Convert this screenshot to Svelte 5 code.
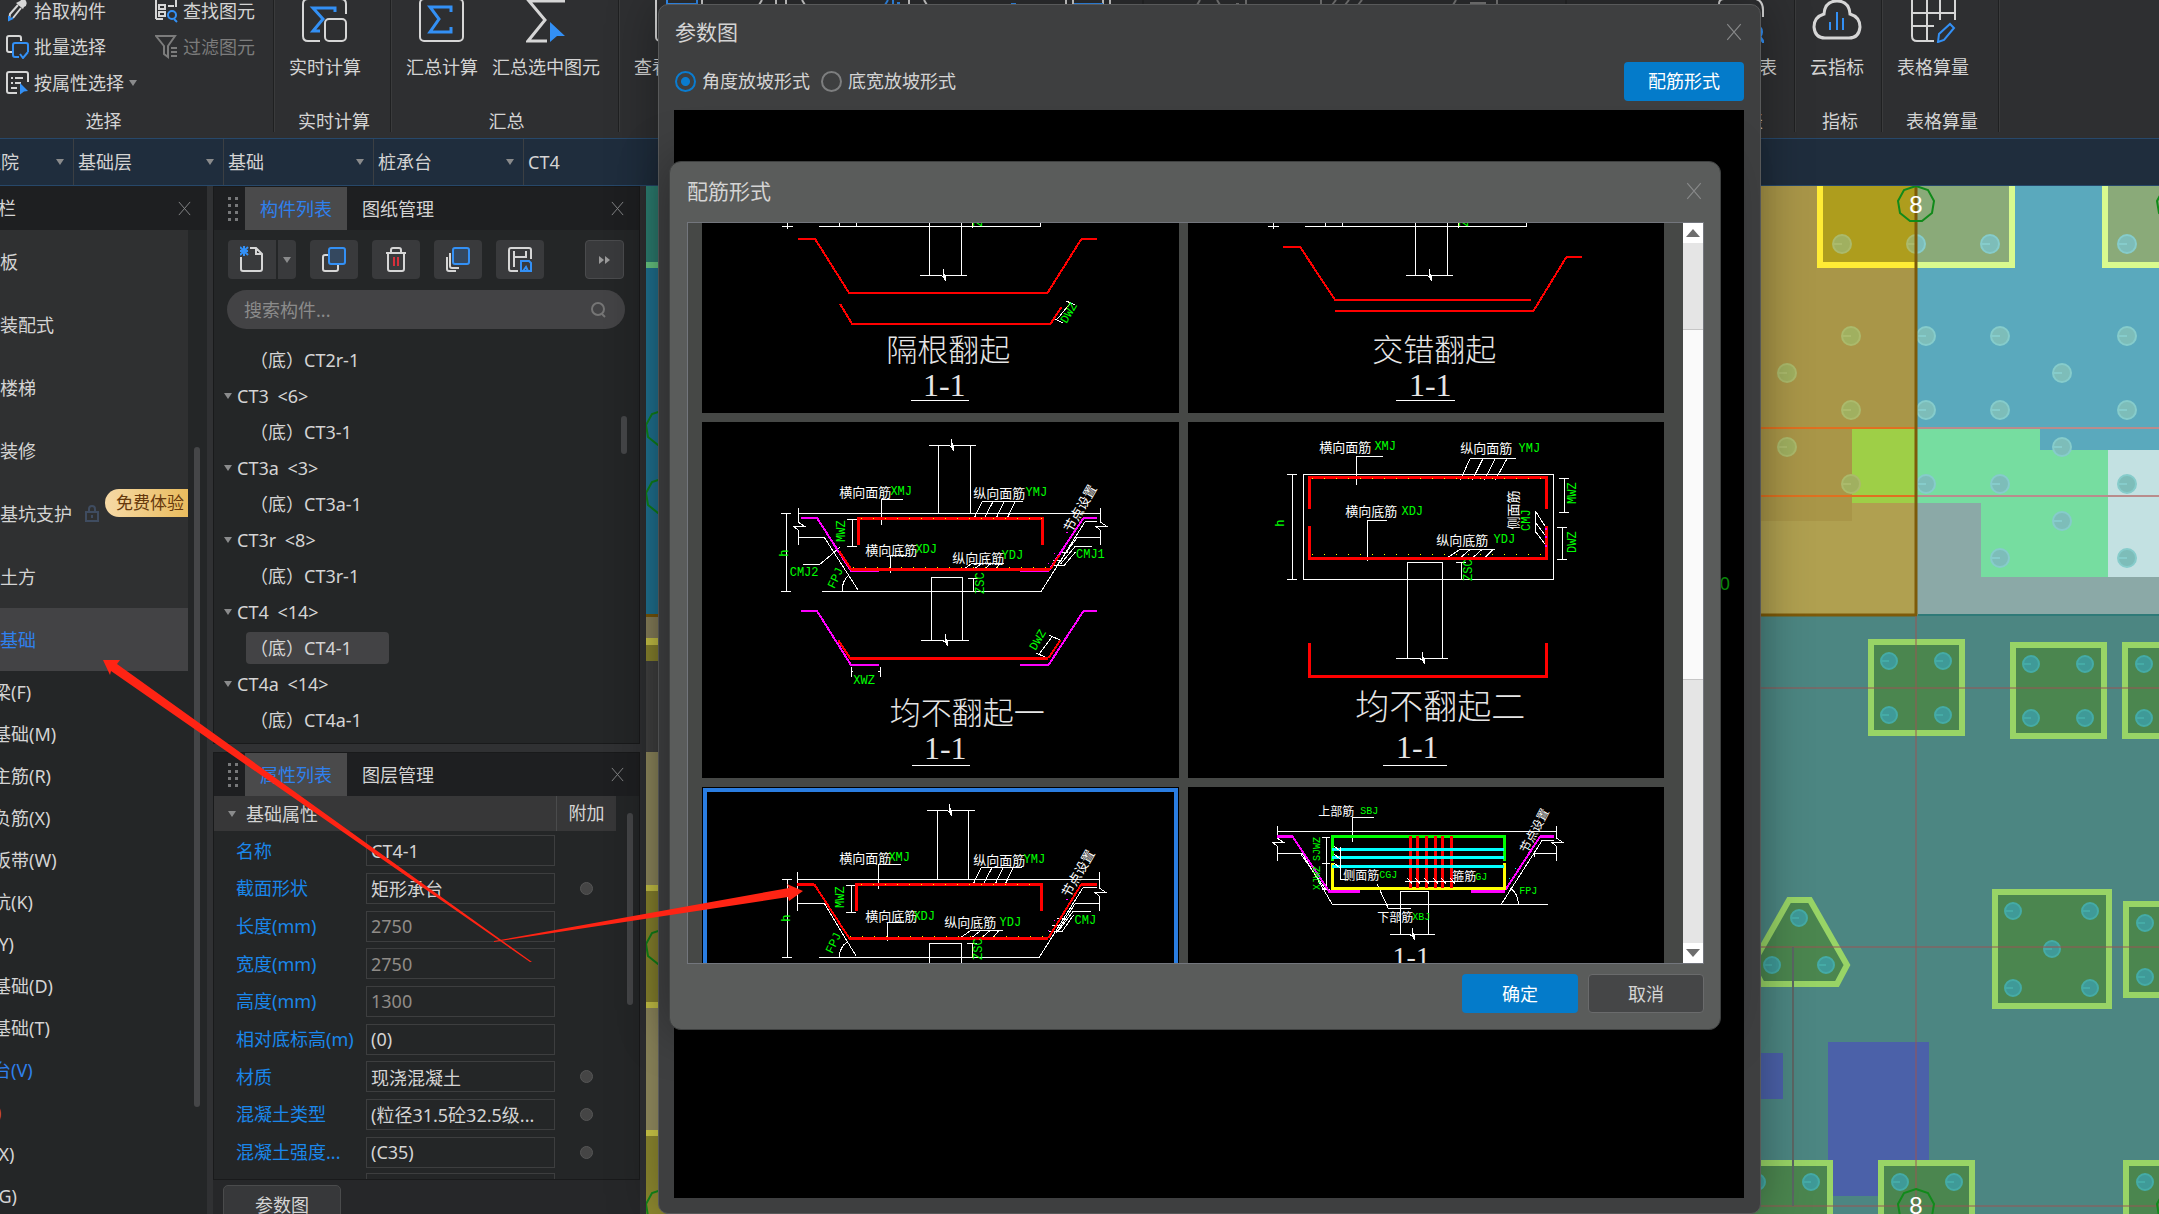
<script>
  const combos = [
    { name: '工程', value: '医院' },
    { name: '楼层', value: '基础层' },
    { name: '类别', value: '基础' },
    { name: '构件类型', value: '桩承台' },
    { name: '构件', value: 'CT4' }
  ];

  const categories = ['板', '装配式', '楼梯', '装修', '基坑支护', '土方', '基础'];
  const subItems = ['梁(F)', '基础(M)', '主筋(R)', '负筋(X)', '板带(W)', '坑(K)', '(Y)', '基础(D)', '基础(T)', '台(V)', ')', '(X)', '(G)'];

  const tree = [
    { child: true, text: '（底）CT2r-1' },
    { text: 'CT3', count: '<6>' },
    { child: true, text: '（底）CT3-1' },
    { text: 'CT3a', count: '<3>' },
    { child: true, text: '（底）CT3a-1' },
    { text: 'CT3r', count: '<8>' },
    { child: true, text: '（底）CT3r-1' },
    { text: 'CT4', count: '<14>' },
    { child: true, text: '（底）CT4-1', selected: true },
    { text: 'CT4a', count: '<14>' },
    { child: true, text: '（底）CT4a-1' }
  ];

  const props = [
    { label: '名称', value: 'CT4-1' },
    { label: '截面形状', value: '矩形承台', extra: true },
    { label: '长度(mm)', value: '2750', dim: true },
    { label: '宽度(mm)', value: '2750', dim: true },
    { label: '高度(mm)', value: '1300', dim: true },
    { label: '相对底标高(m)', value: '(0)' },
    { label: '材质', value: '现浇混凝土', extra: true },
    { label: '混凝土类型', value: '(粒径31.5砼32.5级...', extra: true },
    { label: '混凝土强度...', value: '(C35)', extra: true }
  ];

  let slope = $state('angle');

  // ---- section drawings ----
  const zig = (x1, x2, y, c) => `M${x1} ${y}H${c - 4}L${c - 1} ${y + 2}V${y - 6}L${c + 1} ${y + 6}V${y}H${x2}`;
  const vzig = (x, y1, y2, c) => `M${x} ${y1}V${c - 4}L${x + 6} ${c}H${x - 5}L${x} ${c + 4}V${y2}`;
  const vdim = (x, y1, y2, w = 5) => `M${x} ${y1}V${y2}M${x - w} ${y1}H${x + w}M${x - w} ${y2}H${x + w}`;
  const fan = (tops, ty, bottoms, by, end) =>
    `M${tops[0]} ${ty}H${end}` + tops.map((t, i) => `M${t} ${ty}L${bottoms[i]} ${by}`).join('');
  const capTop = (dx) => `M${819 + dx} 226H${1040 + dx}V222M${839 + dx} 226V222M${856 + dx} 226V222M${782 + dx} 226H${793 + dx}M${787 + dx} 222V229M${929 + dx} 222V275M${961 + dx} 222V275M${972 + dx} 222V228` + zig(920 + dx, 967 + dx, 275, 944 + dx);

  const cells = [
    {
      box: '702 223 476 190', name: '隔根翻起',
      strokes: [
        ['w', capTop(0) + 'M1066 301L1075 305M1070 303L1056 320M1053 318L1063 323'],
        ['r', 'M798 239H815L849 293H1047L1081 239H1097M840 304L852 324H1050L1061 307']
      ],
      texts: [['g', 979, 216, 'ZSC', -90], ['g', 1069, 313, 'DWZ', -60], ['t', 948, 347, '隔根翻起'], ['n', 944, 385, '1-1']],
      rule: 'M911 400H969'
    },
    {
      box: '1187 223 476 190', name: '交错翻起',
      strokes: [
        ['w', capTop(485)],
        ['r', 'M1282 247H1299L1334 300H1530M1334 311H1532L1565 257H1581']
      ],
      texts: [['g', 1464, 216, 'ZSC', -90], ['t', 1433, 347, '交错翻起'], ['n', 1429, 385, '1-1']],
      rule: 'M1395 400H1454'
    },
    {
      box: '702 422 476 356', name: '均不翻起一',
      strokes: [
        ['w', zig(929, 976, 445, 952) + 'M938 445V513M970 445V513M798 513H1100M798 537H824L858 590M1100 537H1077L1056 566M1097 521H1085L1041 591H822'
          + vzig(798, 508, 545, 526) + vzig(1100, 508, 545, 526) + vdim(786, 513, 591) + vdim(852, 519, 546)
          + 'M903 499H881V525M907 555H890V573' + fan([982, 993, 1004, 1015], 501, [973, 983, 995, 1006], 520, 1023)
          + fan([972, 982, 991, 1000], 563, [962, 972, 983, 994], 570, 1004)
          + 'M803 564H820L840 547M842 591Q842 580 849 575M1092 546H1075L1060 564M1075 552L1064 565H1051M1059 552H1068M1053 560H1062'
          + 'M931 640V577H962V640' + zig(921, 969, 640, 946) + vdim(973, 578, 591)
          + 'M1049 635L1060 640M1052 636L1038 655M1036 653L1048 658M851 667V677M880 667V677M851 672L853 671M880 672L878 671'],
        ['m', 'M801 518H817L851 571H879M1097 518H1083L1048 571H1020M801 611H817L851 665H879M1097 611H1083L1048 665H1020'],
        ['r b', 'M858 545V518H1042V545M851 569H1050M850 658H1048'],
        ['r', 'M839 551L851 569M1050 569L1059 555M838 640L850 658M1048 658L1060 640'],
        ['y dots', 'M861 518H1042M853 567H1050'],
        ['m dots', 'M1048 564L1068 530']
      ],
      texts: [
        ['c', 865, 491, '横向面筋'], ['g', 901, 492, 'XMJ'], ['c', 999, 492, '纵向面筋'], ['g', 1036, 493, 'YMJ'],
        ['c', 891, 549, '横向底筋'], ['g', 926, 550, 'XDJ'], ['c', 978, 557, '纵向底筋'], ['g', 1012, 556, 'YDJ'],
        ['g', 842, 531, 'MWZ', -90], ['g', 785, 553, 'h', -90], ['g', 804, 573, 'CMJ2'], ['g', 1090, 555, 'CMJ1'],
        ['g', 836, 578, 'FPJ', -65], ['g', 981, 583, 'ZSC', -90], ['c', 1079, 508, '节点设置', -60],
        ['g', 1038, 640, 'DWZ', -60], ['g', 864, 681, 'XWZ'], ['t', 967, 710, '均不翻起一'], ['n', 945, 748, '1-1']
      ],
      rule: 'M912 765H970'
    },
    {
      box: '1187 422 476 356', name: '均不翻起二',
      strokes: [
        ['w', 'M1302 474H1552V579H1302ZM1382 456H1355V485M1386 520H1366V561'
          + fan([1469, 1482, 1494, 1506], 458, [1459, 1471, 1483, 1494], 480, 1515)
          + fan([1459, 1469, 1481, 1492], 549, [1447, 1460, 1472, 1484], 557, 1494)
          + vdim(1291, 474, 579) + vdim(1563, 478, 512) + vdim(1561, 527, 559) + vdim(1460, 562, 579)
          + 'M1534 511V533M1534 511L1545 528M1534 522L1545 537M1534 531L1545 546M1406 658V562H1441V658' + zig(1395, 1447, 658, 1422)],
        ['r b', 'M1308 509V477H1545V509M1308 526V558H1545V526M1308 643V676H1545V643'],
        ['y dots', 'M1311 478H1545M1311 554H1545'],
        ['m', 'M1545 528V530M1545 536V538M1545 545V547']
      ],
      texts: [
        ['c', 1344, 446, '横向面筋'], ['g', 1384, 447, 'XMJ'], ['c', 1485, 447, '纵向面筋'], ['g', 1528, 449, 'YMJ'],
        ['c', 1370, 510, '横向底筋'], ['g', 1411, 512, 'XDJ'], ['c', 1461, 539, '纵向底筋'], ['g', 1503, 540, 'YDJ'],
        ['c', 1511, 510, '侧面筋', -90], ['g', 1526, 520, 'CMJ', -90], ['g', 1572, 493, 'MWZ', -90], ['g', 1572, 542, 'DWZ', -90],
        ['g', 1280, 523, 'h', -90], ['g', 1468, 570, 'ZSC', -90], ['t big', 1439, 704, '均不翻起二'], ['n', 1416, 747, '1-1']
      ],
      rule: 'M1382 765H1446'
    },
    {
      box: '702 787 476 176', name: '翻起形式', selected: true,
      strokes: [
        ['w', zig(927, 975, 810, 950) + 'M937 810V879M968 810V879M797 879H1099M797 903H824L856 956M1099 903H1075L1056 933M1097 887H1083L1039 957H819'
          + 'M797 872V911' + vzig(1099, 872, 911, 892) + vdim(787, 879, 957) + vdim(851, 885, 912)
          + 'M901 864H878V889M904 922H887V941' + fan([981, 992, 1003, 1013], 867, [972, 982, 994, 1004], 886, 1022)
          + fan([971, 981, 990, 999], 930, [961, 972, 982, 993], 937, 1003)
          + 'M839 957Q840 946 847 942M1091 911H1073L1058 931M1073 915L1062 931H1049M1057 918H1066M1052 925H1061M929 964V943H961V964' + vdim(972, 943, 957)],
        ['r b', 'M797 884H814M849 938H1048M1081 884H1097M856 911V884H1041V911'],
        ['r', 'M814 884L849 938M1048 938L1081 884'],
        ['y dots', 'M861 884H1041M850 936H1048'],
        ['m dots', 'M1048 931L1068 897']
      ],
      texts: [
        ['c', 865, 857, '横向面筋'], ['g', 899, 858, 'XMJ'], ['c', 999, 859, '纵向面筋'], ['g', 1034, 860, 'YMJ'],
        ['c', 891, 915, '横向底筋'], ['g', 924, 917, 'XDJ'], ['c', 970, 921, '纵向底筋'], ['g', 1010, 923, 'YDJ'],
        ['g', 841, 897, 'MWZ', -90], ['g', 787, 918, 'h', -90], ['g', 1085, 921, 'CMJ'], ['g', 834, 943, 'FPJ', -65],
        ['g', 979, 949, 'ZSC', -90], ['c', 1077, 873, '节点设置', -60]
      ],
      rule: ''
    },
    {
      box: '1187 787 476 176', name: '配筋形式六',
      strokes: [
        ['w', 'M1276 831H1555M1276 853H1301L1331 904H1547M1555 853H1533V857M1553 840H1541L1500 904M1299 853L1325 890'
          + vzig(1276, 826, 861, 842) + vzig(1555, 826, 861, 842) + vdim(1325, 837, 863, 4) + vdim(1325, 863, 889, 4)
          + 'M1373 817H1351V842M1376 884L1387 908H1410M1509 888Q1517 894 1517 904M1399 934V891H1427V934' + zig(1389, 1434, 934, 1412)],
        ['m', 'M1276 836H1291L1327 890M1539 836L1504 890'],
        ['m b', 'M1276 836H1291M1327 891H1359M1553 836H1539M1504 891H1470'],
        ['l b', 'M1331 861V836H1503V861'],
        ['y b', 'M1331 863V888H1503V863'],
        ['r b', 'M1409 836V888M1416 836V888M1425 836V888M1434 836V888M1441 836V888M1450 836V888'],
        ['a b', 'M1331 849H1503M1331 857H1503M1331 866H1503'],
        ['w', 'M1347 879H1339V847M1333 846L1340 852M1333 854L1340 860M1333 863L1340 869M1404 881H1461M1406 878L1411 884M1414 878L1419 884M1423 878L1428 884M1432 878L1437 884M1440 878L1445 884M1449 878L1454 884'],
        ['a dots', 'M1508 879L1530 842']
      ],
      texts: [
        ['c sm', 1335, 810, '上部筋'], ['g sm', 1368, 811, 'SBJ'], ['c sm', 1360, 874, '侧面筋'], ['g sm', 1387, 875, 'CGJ'],
        ['c sm', 1463, 875, '箍筋'], ['g sm', 1480, 877, 'GJ'], ['c sm', 1394, 916, '下部筋'], ['g sm', 1420, 917, 'XBJ'],
        ['g sm', 1316, 849, 'SJWZ', -90], ['g sm', 1316, 878, 'XJWZ', -90], ['g sm', 1527, 891, 'FPJ'], ['c sm', 1532, 830, '节点设置', -62],
        ['n small', 1410, 956, '1-1']
      ],
      rule: ''
    }
  ];

  // ---- plan view ----
  const caps = [
    [1868, 639, 97, 97], [2010, 642, 97, 97], [2122, 642, 97, 97], [1992, 889, 120, 120],
    [2123, 901, 97, 97], [1736, 1160, 97, 97], [1878, 1160, 97, 97], [2123, 1160, 97, 97]
  ];
  const smallPiles = [
    [1889, 661], [1943, 661], [1889, 715], [1943, 715], [2031, 664], [2085, 664], [2031, 718], [2085, 718],
    [2144, 664], [2144, 718], [1799, 918], [1772, 965], [1826, 965], [2013, 911], [2090, 911], [2052, 949],
    [2013, 988], [2090, 988], [2145, 923], [2145, 977], [1811, 1182], [1757, 1182], [1900, 1182], [1954, 1182], [2145, 1182]
  ];
  const olivePiles = [[1842, 244], [1851, 336], [1787, 373], [1851, 410], [1787, 447], [1851, 484]];
  const bluePiles = [
    [1990, 244], [2127, 244], [1926, 336], [2000, 336], [2127, 336], [2062, 373], [1926, 410], [2000, 410], [2127, 410],
    [2062, 447], [1926, 484], [2000, 484], [2127, 484], [2062, 521], [2000, 558], [2127, 558]
  ];
  const strip = [
    ['#2f8577', 186, 76], ['#6fd58b', 262, 6], ['#22799a', 268, 346], ['#7d5a0a', 614, 3], ['#8f8760', 617, 21], ['#d3ce4a', 638, 7],
    ['#8f8a30', 645, 16], ['#444444', 661, 91], ['#968f62', 752, 133], ['#d3ce4a', 885, 6], ['#8f8a30', 891, 111], ['#d3ce4a', 1002, 6],
    ['#968f62', 1008, 122], ['#d3ce4a', 1130, 6], ['#8f8a30', 1136, 78]
  ];
  const decagon = (cx, cy) =>
    Array.from({ length: 9 }, (_, i) => {
      const a = (i * 40 - 90) * Math.PI / 180;
      return `${Math.round(cx + 18 * Math.cos(a))},${Math.round(cy + 18 * Math.sin(a))}`;
    }).join(' ');
</script>

{#snippet cross(size)}
  <svg class="cross" width={size} height={size} viewBox="0 0 16 16"><path d="M2 1L14 15M14 1L2 15" /></svg>
{/snippet}

{#snippet caret()}
  <svg class="caret" width="8" height="6" viewBox="0 0 8 6"><path d="M0 0H8L4 6Z" /></svg>
{/snippet}

{#snippet grip()}
  <svg class="grip" width="10" height="24" viewBox="0 0 10 24">
    {#each [0, 7, 14, 21] as y}<path d="M0 {y}h3v3h-3zM7 {y}h3v3h-3z" />{/each}
  </svg>
{/snippet}

<div class="app">
  <header class="ribbon">
    <section class="group pick">
      <div class="tools">
        <button><svg class="ico" width="23" height="24" viewBox="0 0 23 24"><path class="white-f" d="M14 2q4-4 6 0t-2 6l-1 2-7-6z" /><path class="white" d="M12 6L4 15L3 21M15 9L7 19" /><path class="blue" d="M3 17v4l4-2" /></svg>拾取构件</button>
        <button><svg class="ico" width="23" height="24" viewBox="0 0 23 24"><path class="white" d="M7 0V0H1V20M1 20H8M21 0V8M4 6h6v4H4zM4 13h6v4H4zM13 7h6" /><circle class="blue" cx="17" cy="16" r="4" /><path class="blue" d="M19 20l3 3" /></svg>查找图元</button>
        <button><svg class="ico" width="23" height="24" viewBox="0 0 23 24"><path class="white" d="M6 17H3q-2 0-2-2V3q0-2 2-2h10q2 0 2 2v3" /><path class="blue" d="M13 22H9q-2 0-2-2V10q0-2 2-2h11q2 0 2 2v7M14 19l3 4 5-6" /></svg>批量选择</button>
        <button class="off"><svg class="ico" width="23" height="24" viewBox="0 0 23 24"><path class="grey" d="M1 1H20L13 11V22L9 19V11ZM16 13h6M16 17h6M16 21h6" /></svg>过滤图元</button>
        <button><svg class="ico" width="23" height="24" viewBox="0 0 23 24"><path class="white" d="M11 22H3q-2 0-2-2V3q0-2 2-2h17q2 0 2 2v8M5 7h2M9 7h8M5 12h2M9 12h6M5 17h6" /><path class="blue-f" d="M14 12l8 8-4 .5-4 3z" /></svg>按属性选择 {@render caret()}</button>
      </div>
      <h2>选择</h2>
    </section>
    <section class="group rt">
      <div class="bigs">
        <button class="big"><svg width="46" height="43" viewBox="0 0 46 43"><path class="white w2" d="M44 14V4q0-5-5-5H6q-5 0-5 5V36q0 5 5 5H18" /><path class="blue w3" d="M33 12V8H11L21 19L11 31H18" /><rect class="white w2" x="23" y="19" width="21" height="22" rx="4" /></svg>实时计算</button>
      </div>
      <h2>实时计算</h2>
    </section>
    <section class="group sum">
      <div class="bigs">
        <button class="big"><svg width="46" height="43" viewBox="0 0 46 43"><rect class="white w2" x="1" y="-1" width="43" height="42" rx="4" /><path class="blue w3" d="M32 12V7H11L20 19L11 32H32V27" /></svg>汇总计算</button>
        <button class="big"><svg width="40" height="43" viewBox="0 0 40 43"><path class="white w3" d="M39 1H3L19 20L2 41H21" /><path class="blue-f" d="M24 22L39 36L31 36L24 42Z" /></svg>汇总选中图元</button>
      </div>
      <h2>汇总</h2>
    </section>
    <section class="group wide">
      <div class="bigs">
        <button class="big"><svg width="48" height="43" viewBox="0 0 48 43"><rect class="white w2" x="1" y="-5" width="46" height="46" rx="4" /><path class="blue w2" d="M12 0V4H42V0" /></svg>查看工程量</button>
        <svg class="peek" viewBox="0 0 953 8" preserveAspectRatio="none">
          <path class="white" d="M21 5L24 0M38 5V0M48 5V0M67 5L64 0M171 5V0M189 5L186 0M328 5V0M335 5V0M365 5V0M372 5V0" />
          <path class="blue" d="M147 5L150 0M155 5V0M159 3H162M273 4H278M336 4H365" />
          <path class="grey" d="M459 5L462 0M482 5L479 0M498 4H501M508 5V0M583 5V0M594 5L598 0M607 5L611 0M620 5L624 0M715 5L718 0M732 3H748M759 5V0" />
          <path class="dark" d="M405 0V8M828 0V8" />
        </svg>
        <button class="big"><svg width="46" height="43" viewBox="0 0 46 43"><path class="white w2" d="M1 41V4Q1-1 6-1H38Q45 1 45 10V17" /><circle class="blue w2" cx="36" cy="32" r="8" /><path class="blue w3" d="M42 37L46 43" /></svg>查看报表</button>
      </div>
      <h2>报表</h2>
    </section>
    <section class="group idx">
      <div class="bigs">
        <button class="big"><svg width="50" height="43" viewBox="0 0 50 43"><path class="white w3" d="M12 14Q13 1 25 1T38 14Q48 17 48 27Q47 38 37 38H13Q3 38 2 27Q2 17 12 14Z" /><path class="blue w2" d="M18 22V30M25 12V30M31 18V30" /></svg>云指标</button>
      </div>
      <h2>指标</h2>
    </section>
    <section class="group form">
      <div class="bigs">
        <button class="big"><svg width="46" height="43" viewBox="0 0 46 43"><path class="white w2" d="M45 20V-1M2 -1V36q0 5 5 5H24M17 -1V41M30 -1V20M2 13H45M2 26H24" /><path class="blue w2" d="M29 34L40 24L44 28L34 40L28 42Z" /></svg>表格算量</button>
      </div>
      <h2>表格算量</h2>
    </section>
  </header>

  <nav class="combos">
    {#each combos as c, i}
      <div class="combo" class:first={i === 0}>
        <select aria-label={c.name}><option>{c.value}</option></select>
        {#if i < 4}{@render caret()}{/if}
      </div>
    {/each}
  </nav>

  <main>
    <aside class="sidebar">
      <div class="bar"><strong class="cut">栏</strong><button class="x" aria-label="关闭">{@render cross(15)}</button></div>
      <div class="side-body">
        <div class="side-list">
          {#each categories as c}
            <button class="cat" class:on={c === '基础'}>
              {c}
              {#if c === '基坑支护'}
                <svg class="lock" width="14" height="17" viewBox="0 0 14 17"><path d="M1 7H13V16H1ZM4 7V4Q4 1 7 1T10 4V7M7 10V13" /></svg>
                <span class="badge">免费体验</span>
              {/if}
            </button>
          {/each}
          <div class="subs">
            {#each subItems as s}
              <button class="sub" class:on={s === '台(V)'} class:hot={s === ')'}>{s}</button>
            {/each}
          </div>
        </div>
        <div class="rail"><i></i></div>
      </div>
    </aside>

    <div class="dock">
      <section class="panel comps">
        <div class="bar tabs">
          {@render grip()}
          <button class="tab on">构件列表</button>
          <button class="tab">图纸管理</button>
          <button class="x" aria-label="关闭">{@render cross(15)}</button>
        </div>
        <div class="toolbar">
          <div class="split">
            <button class="tb" aria-label="新建"><svg width="24" height="28" viewBox="0 0 24 28"><path class="white" d="M10 2H16L22 8V23Q22 25 20 25H3Q1 25 1 23V11M16 2V8H22" /><path class="blue" d="M0 1L8 9M8 1L0 9M4 0V10M0 5H8" /></svg></button>
            <button class="tb slim" aria-label="新建选项">{@render caret()}</button>
          </div>
          <button class="tb" aria-label="复制"><svg width="24" height="28" viewBox="0 0 24 28"><path class="white" d="M6 9H3Q1 9 1 11V23Q1 25 3 25H14Q16 25 16 23V19" /><rect class="blue tint" x="7" y="2" width="16" height="16" rx="2" /></svg></button>
          <button class="tb" aria-label="删除"><svg width="24" height="28" viewBox="0 0 24 28"><path class="white" d="M2 7H22M4 7V23Q4 25 6 25H18Q20 25 20 23V7M7 7V4Q7 2 9 2H15Q17 2 17 4V7" /><path class="red" d="M10 11V20M14 11V20" /></svg></button>
          <button class="tb" aria-label="层间复制"><svg width="24" height="28" viewBox="0 0 24 28"><path class="white" d="M1 11V23Q1 25 3 25H10M4 7V20Q4 22 6 22H13" /><rect class="blue tint" x="7" y="2" width="16" height="16" rx="2" /></svg></button>
          <button class="tb" aria-label="存档"><svg width="24" height="28" viewBox="0 0 24 28"><path class="white" d="M10 25H3Q1 25 1 23V4Q1 2 3 2H21Q23 2 23 4V13M6 5V21M6 11H18M18 5V12" /><path class="blue" d="M13 15H21L23 17V25H13ZM15 25L18 21L20 25" /></svg></button>
          <button class="tb more" aria-label="更多"><svg width="12" height="10" viewBox="0 0 12 10"><path d="M0 1L5 5L0 9ZM6 1L11 5L6 9Z" /></svg></button>
        </div>
        <label class="search">
          <input type="text" placeholder="搜索构件..." aria-label="搜索构件" />
          <svg width="16" height="16" viewBox="0 0 16 16"><circle cx="7" cy="7" r="6" /><path d="M11 12L14 15" /></svg>
        </label>
        <div class="tree-wrap">
          <ul class="tree">
            {#each tree as t}
              <li class:child={t.child}>
                {#if t.child}
                  <span class:sel={t.selected}>{t.text}</span>
                {:else}
                  {@render caret()}<span>{t.text} <i>{t.count}</i></span>
                {/if}
              </li>
            {/each}
          </ul>
          <div class="thumb tree-thumb"></div>
        </div>
      </section>

      <section class="panel attrs">
        <div class="bar tabs">
          {@render grip()}
          <button class="tab on">属性列表</button>
          <button class="tab">图层管理</button>
          <button class="x" aria-label="关闭">{@render cross(15)}</button>
        </div>
        <div class="attr-body">
          <div class="attr-main">
            <div class="attr-head">{@render caret()}<span>基础属性</span><b>附加</b></div>
            <div class="rows">
              {#each props as p, i}
                <div class="prow">
                  <label for="p{i}">{p.label}</label>
                  <input id="p{i}" type="text" value={p.value} class:dim={p.dim} />
                  {#if p.extra}<input type="checkbox" aria-label="附加 {p.label}" />{/if}
                </div>
              {/each}
            </div>
            <div class="next"><i></i></div>
          </div>
          <div class="thumb attr-thumb"></div>
        </div>
      </section>
      <div class="foot"><button>参数图</button></div>
    </div>

    <div class="plan">
      <svg viewBox="646 186 1513 1028" preserveAspectRatio="xMinYMin slice">
        <rect x="646" y="186" width="1513" height="1028" fill="#4c8682" />
        {#each strip as [fill, y, h]}<rect x="646" {y} width="20" height={h} {fill} />{/each}
        {#each [428, 496, 947, 1207] as y}<polygon class="axis" points={decagon(664, y)} />{/each}

        <rect x="1761" y="186" width="155" height="429" fill="#b0a050" />
        <path d="M1761 186H1916V503H1852V521H1761Z" fill="#a99648" />
        <rect x="1916" y="186" width="243" height="429" fill="#8ba9a7" />
        <rect x="1916" y="186" width="243" height="317" fill="#5aa9bd" />
        <rect x="1852" y="429" width="64" height="74" fill="#9ecf47" />
        <path d="M1916 429H2040V450H2108V577H1981V503H1916Z" fill="#76dda0" />
        <rect x="2108" y="450" width="51" height="127" fill="#c3e1e2" />
        <path d="M1820 186V266H1917V186Z" fill="#ae9d1d" />
        <path d="M1917 186V266H2012V186ZM2105 186V266H2159V186Z" fill="#8aaa79" />
        <path d="M1820 186V265H1917" fill="none" stroke="#ffec35" stroke-width="6" />
        <path d="M1917 265H2012V186M2105 186V265H2159" fill="none" stroke="#d9fa8e" stroke-width="6" />
        <path d="M1761 428H1916M1761 496H1916" stroke="#e07020" stroke-width="2" />
        <path d="M1916 428H2159M1916 496H2159" stroke="#b98c8c" stroke-width="2" />
        {#each olivePiles as [x, y]}<g class="pile olive"><circle cx={x} cy={y} r="9" /><path d="M{x - 8} {y}h8" /></g>{/each}
        {#each bluePiles as [x, y]}<g class="pile sky"><circle cx={x} cy={y} r="9" /><path d="M{x - 8} {y}h8" /></g>{/each}
        <g class="pile olive"><path class="half" d="M1916 235a9 9 0 0 0 0 18M1908 244h8" /></g>
        <g class="pile sky"><path class="half" d="M1916 235a9 9 0 0 1 0 18" /></g>
        <path d="M1916 186V615M1761 615H1917" fill="none" stroke="#7d5a0a" stroke-width="3" />
        <path d="M1918 615H2159" stroke="#2f7a78" stroke-width="2" />

        <rect x="1761" y="1053" width="22" height="46" fill="#4b61a9" />
        <rect x="1828" y="1042" width="101" height="154" fill="#4b61a9" />
        {#each caps as [x, y, w, h]}<rect class="cap" x={x + 3} y={y + 3} width={w - 6} height={h - 6} />{/each}
        <polygon class="cap" points="1789,900 1810,900 1847,965 1837,984 1762,984 1752,965" />
        {#each smallPiles as [x, y]}<g class="pile teal"><circle cx={x} cy={y} r="8" /><path d="M{x - 7} {y}h7" /></g>{/each}
        <path d="M1916 616V1214M1761 688H2159M1761 947H2159M1761 1206H2159" stroke="#9a5555" stroke-width="1" fill="none" />
        <path d="M1793 947V1206" stroke="#5b6664" stroke-width="2" />
        {#each [[1916, 204], [2175, 204], [1916, 1207], [2175, 1207]] as [x, y]}
          <polygon class="axis" points={decagon(x, y)} />
        {/each}
        <text class="axis-no" x="1916" y="213">8</text>
        <text class="axis-no" x="1916" y="1214">8</text>
      </svg>
    </div>
  </main>

  <div class="win outer" role="dialog" aria-label="参数图">
    <div class="win-head"><h1>参数图</h1><button class="x" aria-label="关闭">{@render cross(18)}</button></div>
    <div class="options">
      <label><input type="radio" name="slope" value="angle" bind:group={slope} />角度放坡形式</label>
      <label><input type="radio" name="slope" value="width" bind:group={slope} />底宽放坡形式</label>
      <button class="primary">配筋形式</button>
    </div>
    <div class="stage"><span>0</span></div>
  </div>

  <div class="win inner" role="dialog" aria-label="配筋形式">
    <div class="win-head"><h1>配筋形式</h1><button class="x" aria-label="关闭">{@render cross(18)}</button></div>
    <div class="gallery">
      <div class="cells">
        {#each cells as c}
          <button class="cell" class:picked={c.selected} aria-label={c.name}>
            <svg viewBox={c.box} preserveAspectRatio="xMinYMin slice">
              {#each c.strokes as [k, d]}<path class="s {k}" {d} />{/each}
              {#each c.texts as [k, x, y, t, rot]}
                <text class={k} {x} {y} transform={rot ? `rotate(${rot} ${x} ${y})` : undefined}>{t}</text>
              {/each}
              {#if c.rule}<path class="s w" d={c.rule} />{/if}
            </svg>
          </button>
        {/each}
      </div>
      <div class="vbar">
        <button aria-label="向上"><svg width="14" height="8" viewBox="0 0 14 8"><path d="M0 8L7 0L14 8Z" /></svg></button>
        <div class="track"><i></i></div>
        <button aria-label="向下"><svg width="14" height="8" viewBox="0 0 14 8"><path d="M0 0L7 8L14 0Z" /></svg></button>
      </div>
    </div>
    <div class="actions"><button class="primary">确定</button><button class="plain">取消</button></div>
  </div>

  <svg class="marks" aria-hidden="true">
    <polygon points="103,660 120,660 117,664 532,962 530,962 111,671 110,675" />
    <polygon points="803,891 787,884 789,888 494,941 494,942 788,897 789,901" />
  </svg>
</div>

<style>
  :global(body) { background: #252728; overflow: hidden; }
  .app {
    position: relative; display: flex; flex-direction: column; height: 100vh; overflow: hidden;
    font: 18px/24px "Noto Sans", "Noto Sans CJK SC", sans-serif; color: #d4d4d4; background: #303133;
  }
  .app :is(button, input, select) { font: inherit; color: inherit; background: none; border: 0; padding: 0; margin: 0; min-width: 0; outline: 0; }
  button { white-space: nowrap; }
  svg { display: block; flex: none; }
  h1, h2 { margin: 0; font: inherit; }

  .white { fill: none; stroke: #d6d6d6; stroke-width: 2; }
  .blue { fill: none; stroke: #3390f5; stroke-width: 2; }
  .grey { fill: none; stroke: #7c7c7c; stroke-width: 2; }
  .dark { fill: none; stroke: #1f2021; stroke-width: 1; }
  .red { fill: none; stroke: #d8303c; stroke-width: 2; }
  .tint { fill: #34485f; }
  .white-f { fill: #d6d6d6; }
  .blue-f { fill: #3390f5; }
  .w2 { stroke-width: 2; }
  .w3 { stroke-width: 3; }
  .caret { fill: #8a8b8c; }
  .cross { fill: none; stroke: #88898a; stroke-width: 1; }

  .ribbon { display: flex; height: 138px; flex: none; background: #2e2f31; overflow: hidden; padding-right: 160px; }
  .group { display: flex; flex-direction: column; box-sizing: border-box; flex: none; height: 132px; border-right: 1px solid #1f2021; box-shadow: 1px 0 #3a3b3c; }
  .group h2 { text-align: center; padding: 5px 0 0 4px; height: 28px; box-sizing: border-box; flex: none; }
  .group > div { flex: 1; min-height: 0; }
  .pick { width: 274px; }
  .pick h2 { padding-right: 70px; }
  .tools { display: grid; grid-template-columns: 149px 1fr; grid-auto-rows: 36px; padding-left: 6px; margin-top: -7px; }
  .tools button { display: flex; align-items: center; gap: 5px; }
  .off { color: #7c7c7c !important; }
  .bigs { display: flex; gap: 14px; padding-left: 15px; align-items: flex-start; }
  .big { display: flex; flex-direction: column; align-items: center; gap: 12px; }
  .rt { width: 117px; }
  .sum { width: 228px; }
  .wide { flex: 1; min-width: 0; }
  .wide .bigs { padding-right: 17px; }
  .wide h2 { text-align: right; padding-right: 31px; }
  .peek { flex: 1; min-width: 0; height: 8px; }
  .idx { width: 87px; }
  .form { width: 117px; }

  .combos { display: flex; height: 46px; flex: none; background: #1f2d3d; border-top: 1px solid #27486a; border-bottom: 1px solid #27486a; overflow: hidden; }
  .combo { display: flex; align-items: center; box-sizing: border-box; width: 150px; padding: 0 9px 0 4px; border-right: 1px solid #3b3f43; }
  .combo.first { width: 91px; margin-left: -17px; padding-left: 0; }
  .combo:last-child { flex: 1; border: 0; }
  .combo select { appearance: none; flex: 1; height: 44px; }

  main { display: flex; flex: 1; min-height: 0; gap: 6px; }
  .bar { display: flex; align-items: center; height: 43px; flex: none; background: #1e1f21; }
  .bar .x { margin-left: auto; }
  .cut { font-weight: 400; margin-left: -2px; }

  .sidebar { display: flex; flex-direction: column; width: 207px; flex: none; background: #242627; overflow: hidden; }
  .sidebar .bar { padding-right: 15px; height: 44px; }
  .side-body { display: flex; flex: 1; min-height: 0; }
  .side-list { width: 188px; display: flex; flex-direction: column; }
  .cat { display: flex; align-items: center; height: 63px; flex: none; background: #2f3031 !important; text-align: left; }
  .cat.on { background: #434345 !important; color: #2f80ed !important; }
  .lock { margin-left: 13px; fill: none; stroke: #3f4c60; stroke-width: 2; }
  .badge { align-self: flex-start; margin: 7px 0 0 6px; height: 28px; width: 83px; box-sizing: border-box; padding-left: 11px; border-radius: 14px 0 0 14px; background: linear-gradient(90deg, #f6d9a6, #e9bc5e); color: #66380c; font-size: 17px; line-height: 28px; }
  .subs { display: flex; flex-direction: column; }
  .sub { height: 42px; flex: none; text-align: left; margin-left: -7px !important; }
  .sub.on { color: #2f80ed !important; }
  .sub.hot { color: #d0553c !important; margin-left: -4px !important; }
  .rail { padding: 217px 0 0 6px; }
  .rail i { display: block; width: 6px; height: 660px; border-radius: 3px; background: #454648; }

  .dock { display: flex; flex-direction: column; width: 427px; flex: none; }
  .panel { display: flex; flex-direction: column; box-sizing: border-box; background: #242627; border: 1px solid #191a1b; }
  .comps { height: 558px; flex: none; }
  .attrs { margin-top: 8px; flex: 1; min-height: 0; }
  .tabs { padding: 0 14px; }
  .grip { fill: #77787a; margin-right: 7px; }
  .tab { height: 43px; padding: 0 15px !important; }
  .tab.on { background: #4a4a4b !important; color: #2f80ed !important; }
  .toolbar { display: flex; padding: 10px 15px 11px 14px; gap: 14px; }
  .tb { width: 48px; height: 39px; display: flex; align-items: center; justify-content: center; background: #393a3c !important; border-radius: 4px; }
  .split { display: flex; gap: 2px; }
  .split .tb:first-child { border-radius: 4px 0 0 4px; }
  .slim { width: 18px; border-radius: 0 4px 4px 0; }
  .more { width: 39px; box-sizing: border-box; margin-left: auto !important; border: 1px solid #4a4b4d !important; fill: #9a9a9a; }
  .search { display: flex; align-items: center; margin: 0 14px 0 13px; height: 39px; border-radius: 20px; background: #434345; padding: 0 18px 0 17px; }
  .search input { flex: 1; }
  .search input::placeholder { color: #8b8b8b; opacity: 1; }
  .search svg { fill: none; stroke: #757575; stroke-width: 2; }
  .tree-wrap { display: flex; flex: 1; min-height: 0; }
  .tree { list-style: none; margin: 0; padding: 13px 0 0 10px; flex: 1; }
  .tree li { display: flex; align-items: center; height: 36px; gap: 5px; white-space: pre; }
  .tree li.child { padding-left: 22px; }
  .tree li i { font-style: normal; margin-left: 4px; }
  .tree .child span { padding: 4px 37px 4px 4px; border-radius: 4px; }
  .tree .sel { background: #434345; }
  .thumb { width: 6px; border-radius: 3px; background: #454648; flex: none; }
  .tree-thumb { height: 38px; margin: 87px 12px 0 0; }

  .attr-body { display: flex; flex: 1; min-height: 0; }
  .attr-main { width: 402px; display: flex; flex-direction: column; min-height: 0; }
  .attr-head { display: flex; align-items: center; height: 35px; flex: none; background: #373738; padding-left: 14px; }
  .attr-head span { flex: 1; padding-left: 10px; }
  .attr-head b { font-weight: 400; width: 60px; box-sizing: border-box; border-left: 1px solid #4a4b4c; text-align: center; line-height: 35px; }
  .rows { display: grid; grid-template-rows: repeat(9, 1fr); flex: 1; min-height: 0; padding-top: 1px; }
  .prow { display: flex; align-items: center; padding-left: 22px; }
  .prow label { width: 130px; color: #1a86ea; white-space: nowrap; }
  .prow input[type="text"] { box-sizing: border-box; width: 189px; height: 31px; border: 1px solid #3d3e3f; padding-left: 4px; text-overflow: ellipsis; }
  .prow input.dim { color: #908c88; }
  .prow input[type="checkbox"] { appearance: none; width: 13px; height: 13px; margin-left: 25px; border-radius: 50%; background: #454545; border: 1px solid #565656; box-sizing: border-box; }
  .next { height: 8px; flex: none; overflow: hidden; padding-left: 152px; }
  .next i { display: block; width: 187px; height: 31px; margin-top: 2px; border: 1px solid #3d3e3f; }
  .attr-thumb { height: 192px; margin: 17px 0 0 11px; }
  .foot { height: 34px; flex: none; padding-left: 10px; background: #262729; overflow: hidden; }
  .foot button { width: 118px; height: 40px; margin-top: 5px; border: 1px solid #4a4b4c; border-radius: 5px; background: #37383a; }

  .plan { flex: 1; min-width: 0; overflow: hidden; }
  .plan svg { width: 100%; height: 100%; }
  .axis { fill: none; stroke: #118a1a; stroke-width: 2; }
  .axis-no { fill: #fff; font: 24px "Liberation Sans", sans-serif; text-anchor: middle; }
  .cap { fill: #4b864f; stroke: #98d466; stroke-width: 6; }
  .pile { stroke-width: 2; }
  .olive { fill: #a0b060; stroke: #abba6c; }
  .sky { fill: #7dbdb9; stroke: #86cccb; }
  .teal { fill: #3f9a98; stroke: #45aba6; }

  .win { position: absolute; display: flex; flex-direction: column; box-sizing: border-box; box-shadow: 0 0 50px rgba(0, 0, 0, 0.35); }
  .win-head { display: flex; align-items: center; justify-content: space-between; flex: none; box-sizing: border-box; }
  .win-head h1 { font-size: 21px; line-height: 28px; }
  .outer { left: 658px; top: 4px; width: 1103px; bottom: 0; padding: 0 16px 15px 15px; background: #3e3f40; border: 1px solid #58595a; border-radius: 10px; }
  .outer .win-head { height: 53px; padding: 0 1px; }
  .options { display: flex; align-items: center; height: 46px; flex: none; gap: 11px; padding-left: 1px; margin-bottom: 6px; }
  .options label { display: flex; align-items: center; gap: 6px; }
  .options input { appearance: none; box-sizing: border-box; width: 21px; height: 21px; border: 2px solid #7d7e7f; border-radius: 50%; }
  .options label input { border: 2px solid #7d7e7f; }
  .options input:checked { border-color: #0a7cd0; background: radial-gradient(#0a7cd0 0 4px, transparent 5px); }
  .primary { height: 39px; background: #047bca !important; color: #fff !important; border-radius: 4px; }
  .options .primary { width: 120px; margin-left: auto !important; }
  .stage { flex: 1; background: #000; text-align: right; padding: 461px 14px 0 0; color: #0b9a0b; }
  .inner { left: 669px; top: 161px; width: 1052px; height: 869px; padding: 0 16px 0 17px; background: #5a5c5b; border: 1px solid #3e4040; border-radius: 12px; }
  .inner .win-head { height: 60px; padding: 0 1px 3px 0; }
  .gallery { display: flex; flex: 1; min-height: 0; border: 1px solid #73767d; background: #464846; }
  .cells { display: grid; grid-template-columns: 1fr 1fr; grid-template-rows: 190px 356px 1fr; gap: 9px; flex: 1; min-width: 0; padding: 0 19px 0 14px; }
  .cell { background: #000 !important; overflow: hidden; position: relative; min-height: 0; }
  .cell svg { width: 100%; height: 100%; }
  .picked::after { content: ''; position: absolute; inset: 1px 1px -4px 1px; border: 4px solid #2a7de1; }
  .vbar { display: flex; flex-direction: column; width: 20px; background: #e5e5e5; }
  .vbar button { height: 20px; display: flex; align-items: center; justify-content: center; background: #fff !important; fill: #6d6d6d; }
  .track { flex: 1; padding-top: 86px; }
  .track i { display: block; height: 349px; background: #fafafa; border: solid #c6c6c6; border-width: 1px 0; }
  .actions { display: flex; justify-content: flex-end; gap: 10px; height: 55px; padding-top: 10px; flex: none; }
  .actions button { width: 116px; }
  .plain { height: 39px; box-sizing: border-box; background: #454647 !important; border: 1px solid #6a6b6c !important; border-radius: 4px; }

  .s { fill: none; stroke-width: 1; shape-rendering: crispEdges; }
  .s.w { stroke: #fff; }
  .s.r { stroke: #f00; stroke-width: 2; }
  .s.m { stroke: #f0f; stroke-width: 2; }
  .s.y { stroke: #ff0; }
  .s.l { stroke: #0f0; }
  .s.a { stroke: #0ff; }
  .s.b { stroke-width: 3; }
  .s.dots { stroke-width: 1; stroke-dasharray: 1 11; }
  text.c, text.g, text.t, text.n { text-anchor: middle; dominant-baseline: central; fill: #fff; }
  text.c { font: 13px "Noto Sans CJK SC", sans-serif; }
  text.g { font: 12px "Liberation Mono", monospace; fill: #0f0; }
  text.c.sm { font-size: 12px; }
  text.g.sm { font-size: 10px; }
  text.t { font: 300 31px "Noto Sans CJK SC", sans-serif; fill: #e6e6e6; }
  text.t.big { font-size: 34px; }
  text.n { font: 32px "Liberation Serif", serif; fill: #e6e6e6; }
  text.n.small { font-size: 28px; }

  .marks { position: absolute; inset: 0; width: 100%; height: 100%; pointer-events: none; fill: #ff2414; }
</style>
